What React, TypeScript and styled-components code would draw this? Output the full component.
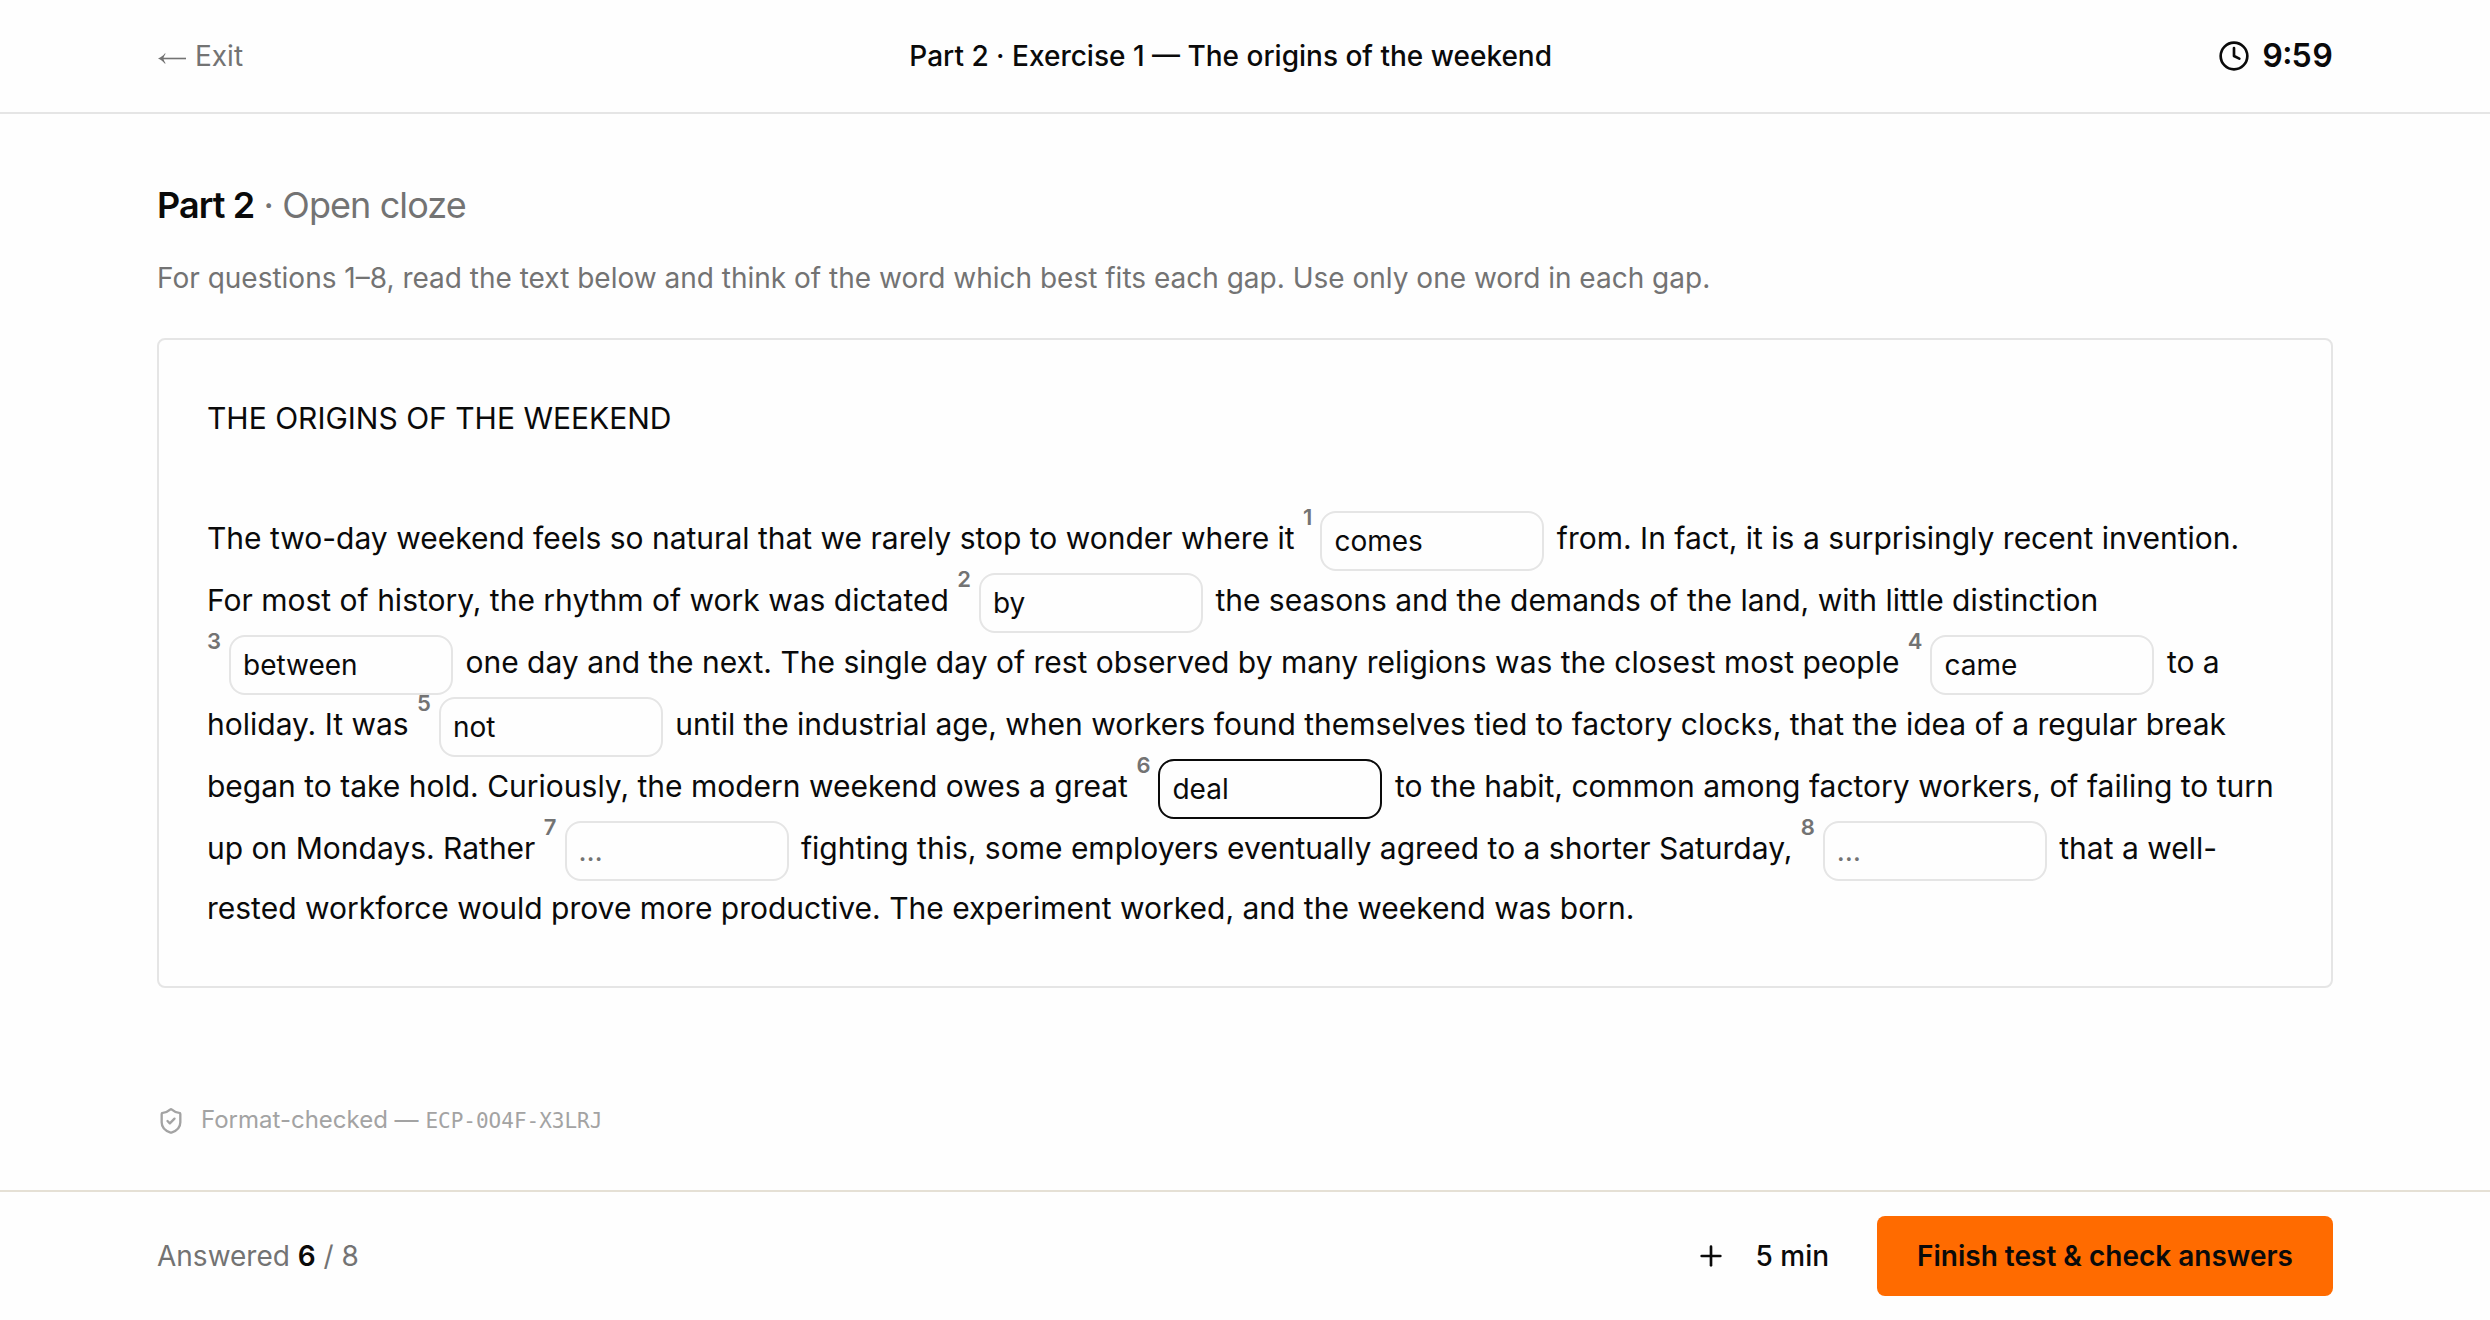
import { Fragment, useState } from "react";
import styled, { createGlobalStyle } from "styled-components";
import { Clock, Plus, ShieldCheck } from "lucide-react";

const GlobalStyle = createGlobalStyle`
  *, *::before, *::after { box-sizing: border-box; }
  body {
    margin: 0;
    background: #fefefe;
    color: #0a0a0a;
    font-family: Inter, "Liberation Sans", sans-serif;
    font-size: 28px;
    line-height: 40px;
  }
  button, input { font: inherit; color: inherit; }
`;

const Page = styled.div`
  display: flex;
  flex-direction: column;
  min-height: 100vh;
`;

const Container = styled.div`
  width: 100%;
  max-width: 2304px;
  margin: 0 auto;
  padding: 0 64px;
`;

const Header = styled.header`
  border-bottom: 2px solid #e5e5e5;
`;

const HeaderRow = styled(Container)`
  display: flex;
  align-items: center;
  justify-content: space-between;
  height: 112px;
`;

const ExitLink = styled.a`
  display: flex;
  align-items: center;
  gap: 8px;
  color: #737373;
  text-decoration: none;
`;

const ExerciseTitle = styled.span`
  font-weight: 500;
`;

const Timer = styled.div`
  display: flex;
  align-items: center;
  gap: 12px;
  font-size: 32px;
  font-weight: 600;
  font-variant-numeric: tabular-nums;
`;

const Main = styled.main`
  flex: 1;
  padding: 64px 0 48px;
`;

const Heading = styled.h1`
  margin: 0;
  font-size: 36px;
  font-weight: 600;
  line-height: 54px;
  letter-spacing: -0.025em;
`;

const Muted = styled.span`
  color: #737373;
  font-weight: 400;
`;

const Instructions = styled.p`
  margin: 22px 0 0;
  line-height: 48px;
  color: #737373;
`;

const Card = styled.section`
  margin-top: 36px;
  padding: 48px;
  border: 2px solid #e5e5e5;
  border-radius: 8px;
  font-size: 30px;
  line-height: 60px;
`;

const CardTitle = styled.h2`
  margin: 0 0 58px;
  font-size: inherit;
  font-weight: 400;
`;

const Passage = styled.p`
  margin: 0;
`;

const Gap = styled.label`
  white-space: nowrap;
`;

const GapNumber = styled.span`
  margin-right: 4px;
  font-size: 22px;
  font-weight: 600;
  line-height: 22px;
  vertical-align: 24px;
  color: #737373;
`;

const GapInput = styled.input`
  width: 224px;
  height: 60px;
  margin: -4px 4px;
  padding: 0 12px;
  border: 2px solid #e5e5e5;
  border-radius: 16px;
  background: transparent;
  font-size: 28px;
  line-height: 40px;
  vertical-align: middle;
  outline: none;

  &::placeholder { color: #737373; opacity: 1; }
  &:focus, &[data-active="true"] { border-color: #0a0a0a; }
`;

const CheckNote = styled.p`
  display: flex;
  align-items: center;
  gap: 16px;
  margin: 112px 0 0;
  font-size: 24px;
  line-height: 40px;
  color: #a3a3a3;
`;

const Code = styled.code`
  font-family: "DejaVu Sans Mono", monospace;
  font-size: 21px;
`;

const Footer = styled.footer`
  border-top: 2px solid #e5e0d5;
`;

const FooterRow = styled(Container)`
  display: flex;
  align-items: center;
  justify-content: space-between;
  height: 128px;
`;

const Progress = styled.div`
  color: #737373;
`;

const Count = styled.strong`
  color: #0a0a0a;
  font-weight: 600;
`;

const Actions = styled.div`
  display: flex;
  align-items: center;
  gap: 24px;
`;

const ExtendButton = styled.button`
  display: flex;
  align-items: center;
  gap: 28px;
  height: 80px;
  padding: 0 24px;
  border: 0;
  background: none;
  font-weight: 500;
`;

const FinishButton = styled.button`
  height: 80px;
  padding: 0 40px;
  border: 0;
  border-radius: 8px;
  background: #ff6b00;
  font-weight: 600;
`;

const BackArrow = () => (
  <svg width="30" height="20" viewBox="0 0 30 20" aria-hidden="true">
    <path d="M5 12.5H29" stroke="currentColor" strokeWidth="1.6" fill="none" />
    <path d="M1 12.5C4 11.2 6.2 9.6 8 7.2L8.6 7.8C7.4 9.6 6.6 11 6.4 12.5C6.6 14 7.4 15.4 8.6 17.2L8 17.8C6.2 15.4 4 13.8 1 12.5Z" fill="currentColor" />
  </svg>
);

const segments = [
  "The two-day weekend feels so natural that we rarely stop to wonder where it ",
  " from. In fact, it is a surprisingly recent invention. For most of history, the rhythm of work was dictated ",
  " the seasons and the demands of the land, with little distinction ",
  " one day and the next. The single day of rest observed by many religions was the closest most people ",
  " to a holiday. It was ",
  " until the industrial age, when workers found themselves tied to factory clocks, that the idea of a regular break began to take hold. Curiously, the modern weekend owes a great ",
  " to the habit, common among factory workers, of failing to turn up on Mondays. Rather ",
  " fighting this, some employers eventually agreed to a shorter Saturday, ",
  " that a well-rested workforce would prove more productive. The experiment worked, and the weekend was born.",
];

export default function App() {
  const [answers, setAnswers] = useState(["comes", "by", "between", "came", "not", "deal", "", ""]);
  const [active, setActive] = useState(5);
  const answered = answers.filter((answer) => answer.trim() !== "").length;

  return (
    <Page>
      <GlobalStyle />
      <Header>
        <HeaderRow>
          <ExitLink href="#exit">
            <BackArrow />
            Exit
          </ExitLink>
          <ExerciseTitle>Part 2 · Exercise 1 — The origins of the weekend</ExerciseTitle>
          <Timer>
            <Clock size={32} aria-hidden="true" />
            9:59
          </Timer>
        </HeaderRow>
      </Header>
      <Main>
        <Container>
          <Heading>
            Part 2<Muted> · Open cloze</Muted>
          </Heading>
          <Instructions>
            For questions 1–8, read the text below and think of the word which best fits each gap. Use only one word in
            each gap.
          </Instructions>
          <Card>
            <CardTitle>THE ORIGINS OF THE WEEKEND</CardTitle>
            <Passage>
              {segments.map((segment, index) => (
                <Fragment key={index}>
                  {segment}
                  {index < answers.length && (
                    <Gap>
                      <GapNumber>{index + 1}</GapNumber>
                      <GapInput
                        type="text"
                        placeholder="…"
                        value={answers[index]}
                        data-active={index === active}
                        onFocus={() => setActive(index)}
                        onChange={(event) =>
                          setAnswers(answers.map((answer, i) => (i === index ? event.target.value : answer)))
                        }
                      />
                    </Gap>
                  )}
                </Fragment>
              ))}
            </Passage>
          </Card>
          <CheckNote>
            <ShieldCheck size={28} aria-hidden="true" />
            <span>
              Format-checked — <Code>ECP-0O4F-X3LRJ</Code>
            </span>
          </CheckNote>
        </Container>
      </Main>
      <Footer>
        <FooterRow>
          <Progress>
            Answered <Count>{answered}</Count> / {answers.length}
          </Progress>
          <Actions>
            <ExtendButton type="button">
              <Plus size={32} aria-hidden="true" />5 min
            </ExtendButton>
            <FinishButton type="button">Finish test &amp; check answers</FinishButton>
          </Actions>
        </FooterRow>
      </Footer>
    </Page>
  );
}
